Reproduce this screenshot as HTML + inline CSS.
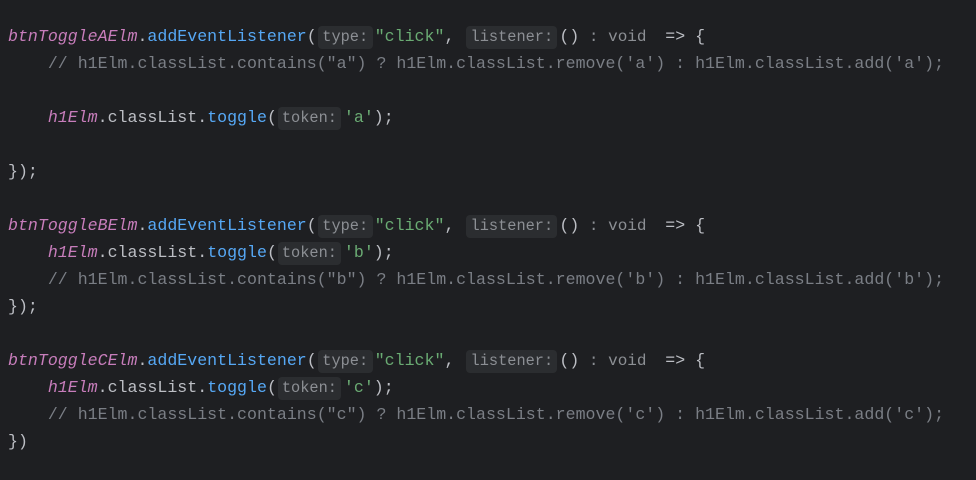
<!DOCTYPE html>
<html><head><meta charset="utf-8"><style>
body{margin:0;background:#1e1f22;width:976px;height:480px;overflow:hidden;}
.l{position:absolute;left:8px;height:27px;line-height:27px;white-space:pre;font-family:"Liberation Mono",monospace;font-size:16.6px;color:#bcbec4;}
.v{color:#c77dbb;font-style:italic}
.m{color:#56a8f5}
.s{color:#6aab73}
.c{color:#7a7e85}
.h{display:inline-block;background:#2b2d30;color:#8c8f94;border-radius:4px;height:23px;line-height:23px;font-size:15.3px;text-align:center;vertical-align:baseline;font-style:normal}
.g{display:inline-block;color:#8c8f94;font-size:16px;}
</style></head><body>
<div class="l" style="top:23px"><span class="v">btnToggleAElm</span>.<span class="m">addEventListener</span>(<span class="h" style="width:55px;margin:0 2px 0 1px">type:</span><span class="s">"click"</span>, <span class="h" style="width:91px;margin:0 2px 0 2px">listener:</span>()<span class="g" style="width:86px"> : void</span>=&gt; {</div>
<div class="l c" style="top:50px">    // h1Elm.classList.contains("a") ? h1Elm.classList.remove('a') : h1Elm.classList.add('a');</div>
<div class="l" style="top:104px">    <span class="v">h1Elm</span>.classList.<span class="m">toggle</span>(<span class="h" style="width:63px;margin:0 3px 0 1px">token:</span><span class="s">'a'</span>);</div>
<div class="l" style="top:158px">});</div>
<div class="l" style="top:212px"><span class="v">btnToggleBElm</span>.<span class="m">addEventListener</span>(<span class="h" style="width:55px;margin:0 2px 0 1px">type:</span><span class="s">"click"</span>, <span class="h" style="width:91px;margin:0 2px 0 2px">listener:</span>()<span class="g" style="width:86px"> : void</span>=&gt; {</div>
<div class="l" style="top:239px">    <span class="v">h1Elm</span>.classList.<span class="m">toggle</span>(<span class="h" style="width:63px;margin:0 3px 0 1px">token:</span><span class="s">'b'</span>);</div>
<div class="l c" style="top:266px">    // h1Elm.classList.contains("b") ? h1Elm.classList.remove('b') : h1Elm.classList.add('b');</div>
<div class="l" style="top:293px">});</div>
<div class="l" style="top:347px"><span class="v">btnToggleCElm</span>.<span class="m">addEventListener</span>(<span class="h" style="width:55px;margin:0 2px 0 1px">type:</span><span class="s">"click"</span>, <span class="h" style="width:91px;margin:0 2px 0 2px">listener:</span>()<span class="g" style="width:86px"> : void</span>=&gt; {</div>
<div class="l" style="top:374px">    <span class="v">h1Elm</span>.classList.<span class="m">toggle</span>(<span class="h" style="width:63px;margin:0 3px 0 1px">token:</span><span class="s">'c'</span>);</div>
<div class="l c" style="top:401px">    // h1Elm.classList.contains("c") ? h1Elm.classList.remove('c') : h1Elm.classList.add('c');</div>
<div class="l" style="top:428px">})</div>
</body></html>
